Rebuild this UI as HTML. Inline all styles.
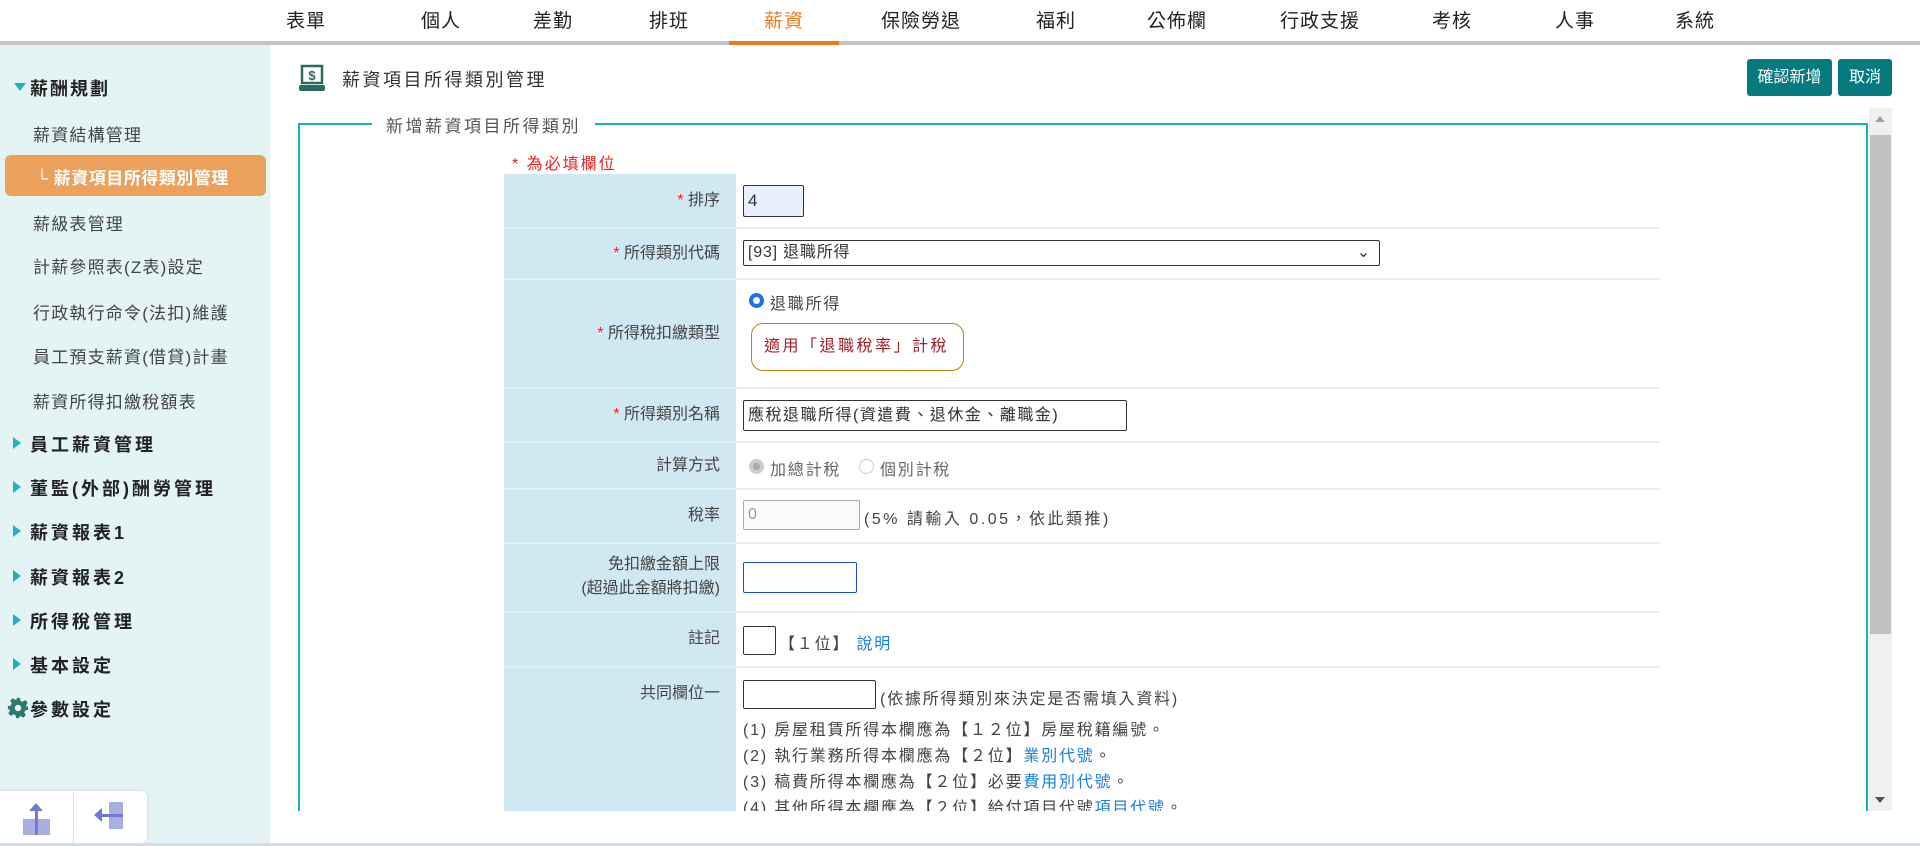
<!DOCTYPE html>
<html><head><meta charset="utf-8"><style>
*{box-sizing:border-box;margin:0;padding:0}
body{width:1920px;height:846px;overflow:hidden;background:#fff;font-family:"Liberation Sans","Noto Sans CJK TC",sans-serif;color:#333;position:relative}
.a{position:absolute}
.nav{font-size:19px;color:#222;top:6px;transform:translateX(-50%);white-space:nowrap;letter-spacing:1px}
.sb{left:0;top:45px;width:270px;height:801px;background:#e4f4f5}
.s1{left:33px;font-size:17px;color:#444;letter-spacing:1.2px}
.s2{left:30px;font-size:18px;color:#222;font-weight:bold;letter-spacing:3px}
.tri{left:13px;width:0;height:0;border-top:6px solid transparent;border-bottom:6px solid transparent;border-left:8px solid #1fb3bf}
.lab{left:504px;width:232px;background:#d0e8f2;text-align:right;padding-right:16px;font-size:16px;color:#444}
.ln{left:504px;width:1156px;height:2px;background:#e3eff5}
.red{color:#e22}
.inp{border:1px solid #333;border-radius:2px;background:#fff;font-size:16px;padding-left:4px;letter-spacing:0.8px}
.t{font-size:16px;color:#444;white-space:nowrap;letter-spacing:1.8px}
.blue{color:#1a7fe0}
</style></head><body>
<div class="a nav" style="left:306px">表單</div>
<div class="a nav" style="left:441px">個人</div>
<div class="a nav" style="left:553px">差勤</div>
<div class="a nav" style="left:669px">排班</div>
<div class="a nav" style="left:784px;color:#f07a1a">薪資</div>
<div class="a nav" style="left:921px">保險勞退</div>
<div class="a nav" style="left:1056px">福利</div>
<div class="a nav" style="left:1177px">公佈欄</div>
<div class="a nav" style="left:1320px">行政支援</div>
<div class="a nav" style="left:1452px">考核</div>
<div class="a nav" style="left:1575px">人事</div>
<div class="a nav" style="left:1695px">系統</div>
<div class="a" style="left:0;top:41px;width:1920px;height:4px;background:#c4c4c4"></div>
<div class="a" style="left:729px;top:41px;width:110px;height:4px;background:#f07a1a"></div>

<div class="a sb"></div>
<div class="a" style="left:14px;top:83px;width:0;height:0;border-left:6px solid transparent;border-right:6px solid transparent;border-top:8px solid #1fb3bf"></div>
<div class="a s2" style="left:30px;top:75px;letter-spacing:2px">薪酬規劃</div>
<div class="a s1" style="top:121px">薪資結構管理</div>
<div class="a" style="left:5px;top:155px;width:261px;height:41px;background:#eba05c;border-radius:6px"></div>
<div class="a" style="left:36px;top:164px;font-size:17px;color:#fff;font-weight:bold;letter-spacing:0.5px">└ 薪資項目所得類別管理</div>
<div class="a s1" style="top:210px">薪級表管理</div>
<div class="a s1" style="top:253px">計薪參照表(Z表)設定</div>
<div class="a s1" style="top:299px">行政執行命令(法扣)維護</div>
<div class="a s1" style="top:343px">員工預支薪資(借貸)計畫</div>
<div class="a s1" style="top:388px">薪資所得扣繳稅額表</div>
<div class="a tri" style="top:437px"></div><div class="a s2" style="top:431px">員工薪資管理</div>
<div class="a tri" style="top:481px"></div><div class="a s2" style="top:475px">董監(外部)酬勞管理</div>
<div class="a tri" style="top:525px"></div><div class="a s2" style="top:519px">薪資報表1</div>
<div class="a tri" style="top:570px"></div><div class="a s2" style="top:564px">薪資報表2</div>
<div class="a tri" style="top:614px"></div><div class="a s2" style="top:608px">所得稅管理</div>
<div class="a tri" style="top:658px"></div><div class="a s2" style="top:652px">基本設定</div>
<svg class="a" style="left:7px;top:697px" width="22" height="22" viewBox="0 0 24 24"><path fill="#2a7a70" d="M10 1h4l.7 3.2 2.3 1 2.8-1.8 2.8 2.8-1.8 2.8 1 2.3L23 10v4l-3.2.7-1 2.3 1.8 2.8-2.8 2.8-2.8-1.8-2.3 1L14 23h-4l-.7-3.2-2.3-1-2.8 1.8-2.8-2.8 1.8-2.8-1-2.3L1 14v-4l3.2-.7 1-2.3-1.8-2.8 2.8-2.8 2.8 1.8 2.3-1zM12 8.5a3.5 3.5 0 100 7 3.5 3.5 0 000-7z"/></svg>
<div class="a s2" style="top:696px">參數設定</div>
<div class="a" style="left:0;top:791px;width:147px;height:52px;background:#fff;border-radius:0 6px 6px 0;box-shadow:0 0 3px #ccc"></div>
<div class="a" style="left:73px;top:791px;width:1px;height:52px;background:#ddd"></div>
<div class="a" style="left:23px;top:819px;width:27px;height:16px;background:#a9aee0"></div>
<div class="a" style="left:35px;top:805px;width:3px;height:30px;background:#7379d0"></div>
<div class="a" style="left:29px;top:803px;width:0;height:0;border-left:7px solid transparent;border-right:7px solid transparent;border-bottom:8px solid #7379d0"></div>
<div class="a" style="left:109px;top:802px;width:14px;height:27px;background:#a9aee0"></div>
<div class="a" style="left:98px;top:814px;width:25px;height:3px;background:#7379d0"></div>
<div class="a" style="left:94px;top:808px;width:0;height:0;border-top:7px solid transparent;border-bottom:7px solid transparent;border-right:8px solid #7379d0"></div>

<svg class="a" style="left:298px;top:64px" width="30" height="30" viewBox="0 0 30 30"><rect x="4" y="2" width="20" height="17" fill="none" stroke="#2a6a60" stroke-width="2.5"/><text x="14" y="16" font-size="13" font-weight="bold" fill="#2a6a60" text-anchor="middle" font-family="Liberation Sans">$</text><rect x="1" y="21" width="26" height="6" rx="2" fill="#2a6a60"/></svg>
<div class="a" style="left:342px;top:66px;font-size:18px;color:#333;letter-spacing:2.5px">薪資項目所得類別管理</div>
<div class="a" style="left:1747px;top:59px;width:85px;height:37px;background:#067a7e;border-radius:3px;color:#fff;font-size:16px;text-align:center;line-height:37px">確認新增</div>
<div class="a" style="left:1838px;top:59px;width:54px;height:37px;background:#067a7e;border-radius:3px;color:#fff;font-size:16px;text-align:center;line-height:37px">取消</div>

<div class="a" style="left:298px;top:123px;width:1570px;height:700px;border:2px solid #1ab3bd;border-bottom:none"></div>
<div class="a" style="left:372px;top:112px;background:#fff;padding:0 14px;font-size:17px;color:#555;letter-spacing:2.5px">新增薪資項目所得類別</div>
<div class="a" style="left:1869px;top:108px;width:23px;height:703px;background:#f0f0f0"></div>
<div class="a" style="left:1870px;top:135px;width:21px;height:499px;background:#c1c1c1"></div>
<div class="a" style="left:1875px;top:116px;width:0;height:0;border-left:5px solid transparent;border-right:5px solid transparent;border-bottom:6px solid #a3a3a3"></div>
<div class="a" style="left:1875px;top:797px;width:0;height:0;border-left:5px solid transparent;border-right:5px solid transparent;border-top:6px solid #505050"></div>

<div class="a red" style="left:512px;top:150px;font-size:16px;letter-spacing:2px">* 為必填欄位</div>
<div class="a lab" style="top:174px;height:54px;line-height:54px"><span class="red">*</span> 排序</div>
<div class="a lab" style="top:228px;height:51px;line-height:51px"><span class="red">*</span> 所得類別代碼</div>
<div class="a lab" style="top:279px;height:109px;line-height:109px"><span class="red">*</span> 所得稅扣繳類型</div>
<div class="a lab" style="top:388px;height:54px;line-height:54px"><span class="red">*</span> 所得類別名稱</div>
<div class="a lab" style="top:442px;height:47px;line-height:47px">計算方式</div>
<div class="a lab" style="top:489px;height:54px;line-height:54px">稅率</div>
<div class="a lab" style="top:543px;height:69px;padding-top:10px;line-height:24px">免扣繳金額上限<br>(超過此金額將扣繳)</div>
<div class="a lab" style="top:612px;height:55px;padding-top:12px">註記</div>
<div class="a lab" style="top:667px;height:144px;padding-top:12px">共同欄位一</div>
<div class="a ln" style="top:227px"></div><div class="a ln" style="top:278px"></div><div class="a ln" style="top:387px"></div><div class="a ln" style="top:441px"></div><div class="a ln" style="top:488px"></div><div class="a ln" style="top:542px"></div><div class="a ln" style="top:611px"></div><div class="a ln" style="top:666px"></div>

<div class="a inp" style="left:743px;top:185px;width:61px;height:32px;background:#e8f0fe;line-height:30px;font-size:17px">4</div>
<div class="a inp" style="left:743px;top:240px;width:637px;height:26px;line-height:24px">[93] 退職所得<span style="position:absolute;right:8px;top:0">⌄</span></div>
<div class="a" style="left:749px;top:293px;width:15px;height:15px;border-radius:50%;border:4px solid #1a73e8"></div>
<div class="a t" style="left:770px;top:290px">退職所得</div>
<div class="a" style="left:751px;top:323px;width:213px;height:48px;border:1px solid #b8860b;border-radius:12px;color:#a0202a;font-size:16px;line-height:46px;padding-left:12px;letter-spacing:2.5px">適用「退職稅率」計稅</div>
<div class="a inp" style="left:743px;top:400px;width:384px;height:31px;line-height:29px;letter-spacing:1.5px">應稅退職所得(資遣費、退休金、離職金)</div>
<div class="a" style="left:749px;top:459px;width:15px;height:15px;border-radius:50%;border:4px solid #ccc;background:#aaa"></div>
<div class="a t" style="left:770px;top:456px;color:#666">加總計稅</div>
<div class="a" style="left:859px;top:459px;width:15px;height:15px;border-radius:50%;border:1px solid #ccc"></div>
<div class="a t" style="left:880px;top:456px;color:#666">個別計稅</div>
<div class="a inp" style="left:743px;top:500px;width:117px;height:30px;border-color:#aaa;background:#fafafa;color:#999;line-height:28px">0</div>
<div class="a t" style="left:864px;top:505px;letter-spacing:2.5px">(5% 請輸入 0.05，依此類推)</div>
<div class="a inp" style="left:743px;top:562px;width:114px;height:31px;border-color:#1a4fd0"></div>
<div class="a inp" style="left:743px;top:626px;width:33px;height:29px"></div>
<div class="a t" style="left:779px;top:630px">【１位】 <span class="blue">說明</span></div>
<div class="a inp" style="left:743px;top:680px;width:133px;height:29px"></div>
<div class="a t" style="left:880px;top:685px">(依據所得類別來決定是否需填入資料)</div>
<div class="a t" style="left:743px;top:716px">(1) 房屋租賃所得本欄應為【１２位】房屋稅籍編號。</div>
<div class="a t" style="left:743px;top:742px">(2) 執行業務所得本欄應為【２位】<span class="blue">業別代號</span>。</div>
<div class="a t" style="left:743px;top:768px">(3) 稿費所得本欄應為【２位】必要<span class="blue">費用別代號</span>。</div>
<div class="a t" style="left:743px;top:794px;height:17px;overflow:hidden">(4) 其他所得本欄應為【２位】給付項目代號<span class="blue">項目代號</span>。</div>
<div class="a" style="left:270px;top:811px;width:1650px;height:32px;background:#fff"></div>
<div class="a" style="left:0;top:843px;width:1920px;height:3px;background:#d4dde8"></div>
</body></html>
